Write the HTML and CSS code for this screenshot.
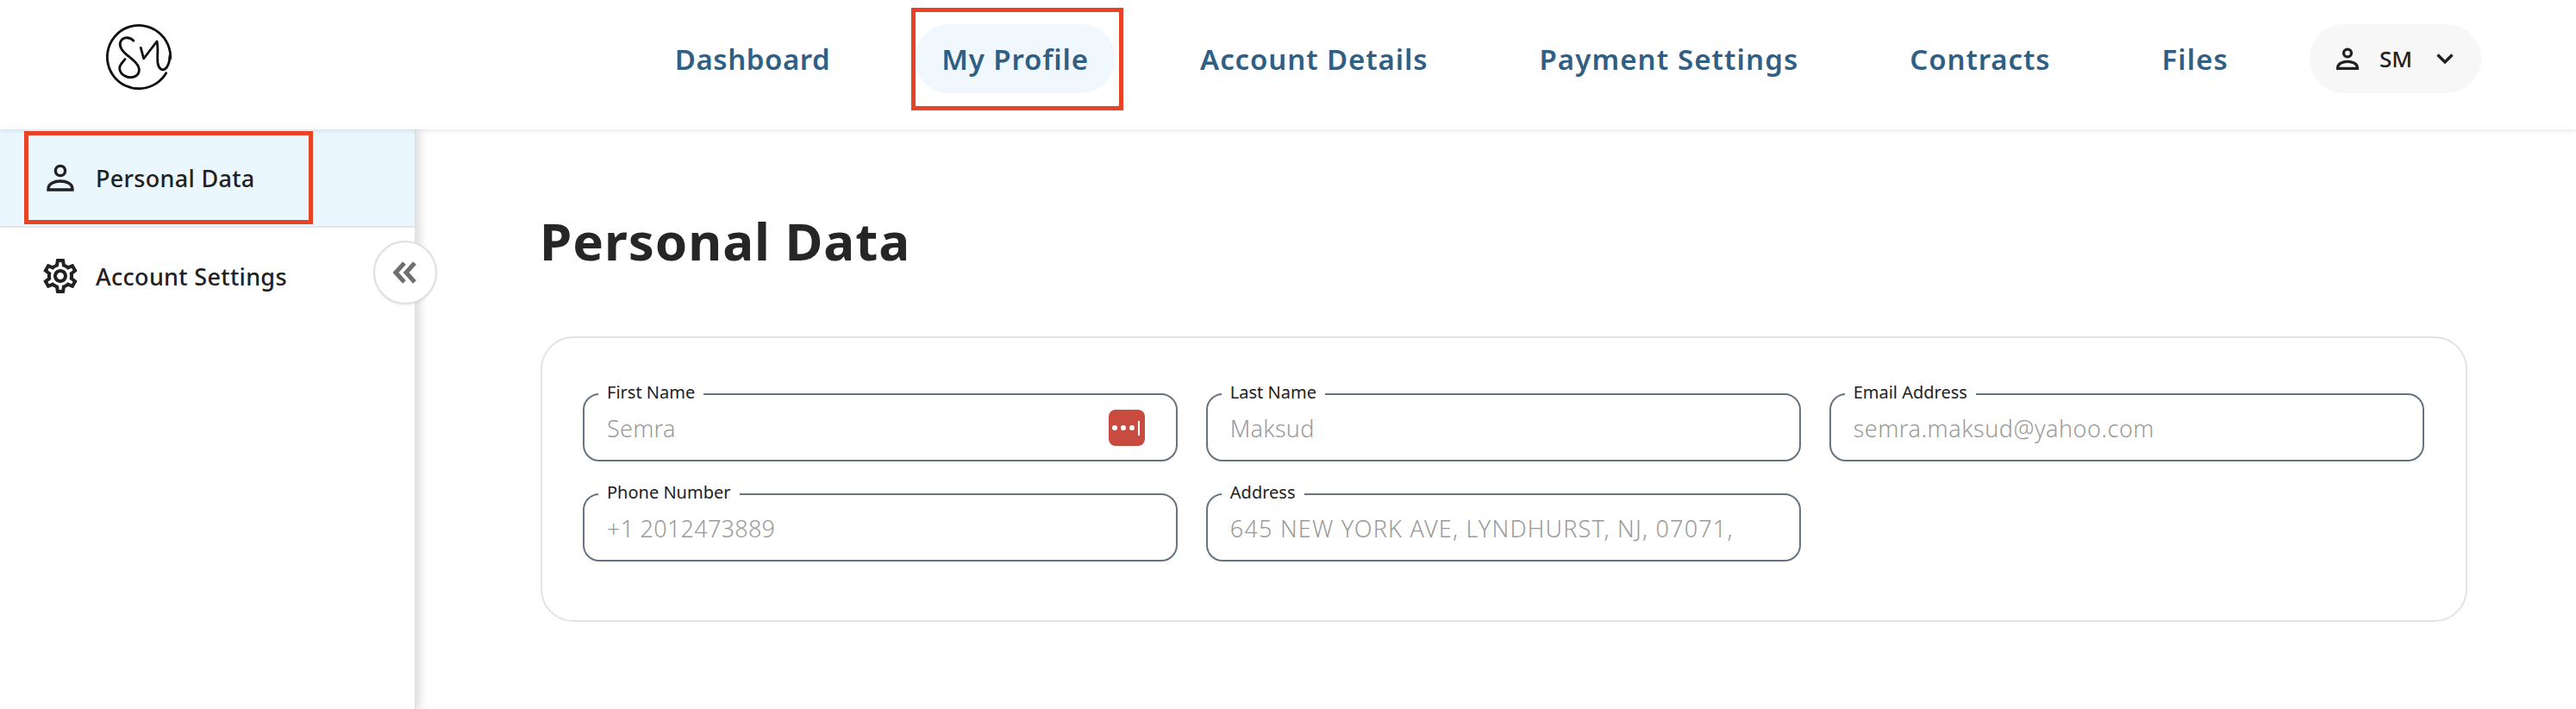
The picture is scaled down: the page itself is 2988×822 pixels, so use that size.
FILE: index.html
```html
<!DOCTYPE html>
<html lang="en">
<head>
<meta charset="utf-8">
<title>Personal Data</title>
<link rel="stylesheet" href="styles.css">
</head>
<body>
<header class="topbar">
  <a class="logo" href="#">
    <svg class="logo-mark" viewBox="0 0 360 300" fill="none" stroke="#111" stroke-width="8.500" stroke-linecap="round" stroke-linejoin="round">
      <path d="M278 200A110 110 0 1 1 293 150"/>
      <path d="M165 88C152 74 128 72 119 92C112 110 128 126 145 140C165 156 186 172 184 192C182 212 158 220 138 212C118 204 110 184 122 168L135 152"/>
      <path d="M190 112L200 150L246 90C252 115 246 140 249 165C252 186 264 192 274 186C286 178 290 160 291 140"/>
    </svg>
  </a>
  <nav class="mainnav">
    <a class="navlink nl-dash" href="#">Dashboard</a>
    <a class="navlink nl-prof active" href="#">My Profile</a>
    <a class="navlink nl-acct" href="#">Account Details</a>
    <a class="navlink nl-pay" href="#">Payment Settings</a>
    <a class="navlink nl-cont" href="#">Contracts</a>
    <a class="navlink nl-file" href="#">Files</a>
    <button class="usermenu" type="button">
      <svg class="usericon" viewBox="0 0 32 32" fill="none" stroke="#212121" stroke-width="4"><circle cx="16" cy="8" r="5.500"/><path d="M2 30v-1c0-6 7-9 14-9s14 3 14 9v1z"/></svg>
      <span class="username">SM</span>
      <svg class="chev" viewBox="0 0 20 12" fill="none" stroke="#212121" stroke-width="3.400"><path d="M1.500 1.500L10 10l8.500-8.500"/></svg>
    </button>
  </nav>
</header>
<div class="page">
  <aside class="sidebar">
    <a class="sideitem selected" href="#">
      <span class="sideicon"><svg class="person" viewBox="0 0 32 32" fill="none" stroke="#212121" stroke-width="3.400"><circle cx="16" cy="8" r="5.600"/><path d="M2 30v-1c0-6 7-9 14-9s14 3 14 9v1z"/></svg></span>
      <span>Personal Data</span>
    </a>
    <a class="sideitem" href="#">
      <span class="sideicon"><svg class="gear" viewBox="0 0 24 24" fill="#212121"><path d="M19.43 12.98c.04-.32.07-.64.07-.98 0-.34-.03-.66-.07-.98l2.110-1.650c.19-.15.24-.42.12-.64l-2-3.460c-.09-.16-.26-.25-.44-.25-.06 0-.12.01-.17.03l-2.490 1c-.52-.4-1.080-.73-1.690-.98l-.38-2.650C14.460 2.180 14.250 2 14 2h-4c-.25 0-.46.18-.49.42l-.38 2.650c-.61.25-1.170.59-1.690.98l-2.490-1c-.06-.02-.12-.03-.18-.03-.17 0-.34.09-.43.25l-2 3.460c-.13.22-.07.49.12.64l2.110 1.650c-.04.32-.07.65-.07.98 0 .33.03.66.07.98l-2.110 1.650c-.19.15-.24.42-.12.64l2 3.460c.09.16.26.25.44.25.06 0 .12-.01.17-.03l2.490-1c.52.4 1.080.73 1.690.98l.38 2.650c.03.24.24.42.49.42h4c.25 0 .46-.18.49-.42l.38-2.650c.61-.25 1.170-.59 1.690-.98l2.490 1c.06.02.12.03.18.03.17 0 .34-.09.43-.25l2-3.460c.12-.22.07-.49-.12-.64l-2.110-1.650zm-1.980-1.710c.04.31.05.52.05.73 0 .21-.02.43-.05.73l-.14 1.130.89.7 1.080.84-.7 1.210-1.270-.51-1.040-.42-.9.68c-.43.32-.84.56-1.250.73l-1.060.43-.16 1.130-.2 1.350h-1.400l-.19-1.350-.16-1.130-1.060-.43c-.43-.18-.83-.41-1.230-.71l-.91-.7-1.060.43-1.270.51-.7-1.210 1.080-.84.89-.7-.14-1.130c-.03-.31-.05-.54-.05-.74s.02-.43.05-.73l.14-1.130-.89-.7-1.080-.84.7-1.210 1.270.51 1.040.42.9-.68c.43-.32.84-.56 1.250-.73l1.060-.43.16-1.130.2-1.350h1.390l.19 1.350.16 1.130 1.060.43c.43.18.83.41 1.230.71l.91.7 1.060-.43 1.270-.51.7 1.210-1.070.85-.89.7.14 1.130zM12 8c-2.210 0-4 1.790-4 4s1.790 4 4 4 4-1.790 4-4-1.790-4-4-4zm0 6c-1.100 0-2-.9-2-2s.9-2 2-2 2 .9 2 2-.9 2-2 2z"/></svg></span>
      <span>Account Settings</span>
    </a>
    <button class="collapse" type="button">
      <svg viewBox="0 0 28 26" fill="none" stroke="#6f6f6f" stroke-width="5"><path d="M13 2L3 13l10 11M25 2L15 13l10 11"/></svg>
    </button>
  </aside>
  <main class="content">
    <h1 class="title">Personal Data</h1>
    <section class="card">
      <div class="field">
        <label class="flabel">First Name</label>
        <div class="fvalue">Semra</div>
        <span class="lpass"><i></i><i></i><i></i><b></b></span>
      </div>
      <div class="field">
        <label class="flabel">Last Name</label>
        <div class="fvalue">Maksud</div>
      </div>
      <div class="field">
        <label class="flabel">Email Address</label>
        <div class="fvalue fv-mail">semra.maksud@yahoo.com</div>
      </div>
      <div class="field">
        <label class="flabel">Phone Number</label>
        <div class="fvalue">+1 2012473889</div>
      </div>
      <div class="field">
        <label class="flabel">Address</label>
        <div class="fvalue fv-addr">645 NEW YORK AVE, LYNDHURST, NJ, 07071,</div>
      </div>
    </section>
  </main>
</div>
<div class="mark mark-nav"></div>
<div class="mark mark-side"></div>
</body>
</html>
```

FILE: styles.css
```css
* { box-sizing: border-box; }
html, body { height: 100%; }
body {
  margin: 0;
  background: #fff;
  color: #212121;
  font-family: "Noto Sans", "Liberation Sans", sans-serif;
  overflow: hidden;
  display: flex;
  flex-direction: column;
}
a { color: inherit; text-decoration: none; }

.topbar {
  position: relative;
  z-index: 3;
  flex: none;
  height: 150px;
  display: flex;
  align-items: center;
  justify-content: space-between;
  padding: 0 110px 14px 100px;
  background: #fff;
  box-shadow: 0 1px 6px rgba(0, 0, 0, 0.12);
}
.logo { display: block; width: 120px; height: 100px; }
.logo-mark { display: block; width: 120px; height: 100px; }
.mainnav { display: flex; align-items: center; gap: 67px; }
.navlink {
  height: 80px;
  display: flex;
  align-items: center;
  padding: 0 31px;
  border-radius: 40px;
  color: #315f84;
  font-size: 33px;
  font-weight: 600;
  white-space: nowrap;
}
.nl-dash { letter-spacing: 0.55px; }
.nl-prof { letter-spacing: 0.9px; }
.nl-acct { letter-spacing: 0.9px; }
.nl-pay { letter-spacing: 1.1px; }
.nl-cont { letter-spacing: 0.9px; }
.nl-file { letter-spacing: 1.1px; }
.navlink.active { background: #f0f8fe; }
.usermenu {
  height: 80px;
  width: 199px;
  margin-left: -4px;
  display: flex;
  align-items: center;
  padding: 0 0 0 31px;
  border: 0;
  border-radius: 40px;
  background: #f7f7f7;
  color: #212121;
  font: inherit;
}
.usericon { width: 26px; height: 26px; }
.username { margin-left: 24px; font-size: 26px; font-weight: 500; }
.chev { width: 20px; height: 12px; margin-left: 28px; }

.page { flex: 1; display: flex; min-height: 0; }
.sidebar {
  position: relative;
  z-index: 2;
  flex: none;
  width: 483px;
  border-right: 2px solid #e2e2e2;
  box-shadow: 4px 0 10px rgba(0, 0, 0, 0.14);
  background: #fff;
}
.sideitem {
  height: 112px;
  display: flex;
  align-items: center;
  padding-left: 46px;
  gap: 17px;
  font-size: 27px;
  font-weight: 500;
  letter-spacing: 0.3px;
  color: #212121;
}
.sideitem.selected { height: 114px; background: #ebf7fe; border-bottom: 2px solid #e2e6e9; }
.sideicon { width: 48px; height: 48px; display: flex; align-items: center; justify-content: center; }
.person { width: 32px; height: 32px; }
.gear { width: 48px; height: 48px; }
.collapse {
  position: absolute;
  left: 433px;
  top: 129px;
  width: 74px;
  height: 74px;
  display: flex;
  align-items: center;
  justify-content: center;
  padding: 0;
  border: 2px solid #e0e0e0;
  border-radius: 50%;
  background: #fff;
  box-shadow: 0 1px 3px rgba(0, 0, 0, 0.08);
}
.collapse svg { width: 28px; height: 26px; }

.content { flex: 1; padding: 0 126px 0 144px; min-width: 0; }
.title {
  margin: 85px 0 0 -1px;
  font-size: 60px;
  line-height: 88px;
  font-weight: 700;
  letter-spacing: 0.95px;
  color: #262626;
}
.card {
  margin-top: 67px;
  height: 331px;
  padding: 64px 48px 0 47px;
  display: grid;
  grid-template-columns: repeat(3, 1fr);
  grid-auto-rows: 79px;
  gap: 37px 32.5px;
  border: 2px solid #e3e3e3;
  border-radius: 38px;
}
.field {
  position: relative;
  display: flex;
  align-items: center;
  padding: 2px 26px 0;
  border: 2px solid #667380;
  border-radius: 19px;
}
.flabel {
  position: absolute;
  left: 16px;
  top: -15px;
  padding: 0 10px;
  background: #fff;
  font-size: 20px;
  line-height: 24px;
  color: #212121;
  white-space: nowrap;
}
.fvalue { font-size: 27px; font-weight: 300; letter-spacing: 0.25px; color: #9a9a9a; white-space: nowrap; }
.fv-mail { letter-spacing: 0.5px; }
.fv-addr { letter-spacing: 1.2px; }
.lpass {
  position: absolute;
  right: 36px;
  top: 17px;
  width: 42px;
  height: 42px;
  display: flex;
  align-items: center;
  padding-left: 4px;
  gap: 4px;
  border-radius: 8px;
  background: #c84b40;
}
.lpass i { width: 6px; height: 6px; border-radius: 50%; background: #fff; }
.lpass b { width: 2px; height: 17px; background: #fff; }

.mark { position: absolute; z-index: 5; border: 5px solid #e84326; pointer-events: none; }
.mark-nav { left: 1057px; top: 9px; width: 246px; height: 119px; }
.mark-side { left: 28px; top: 152px; width: 335px; height: 108px; }
```
